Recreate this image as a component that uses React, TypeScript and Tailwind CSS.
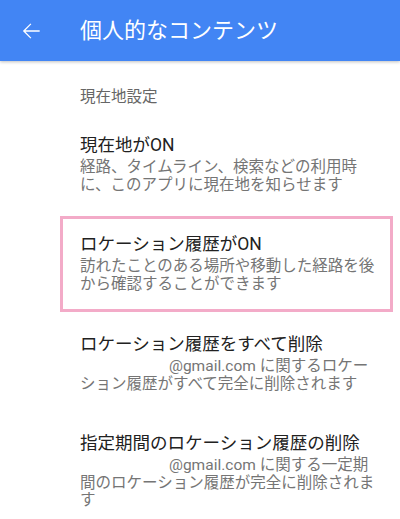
import React from "react";

const font = { fontFamily: 'Roboto, "Noto Sans CJK JP", sans-serif' };

function Item({ title, lines, indent }: { title: string; lines: string[]; indent?: boolean }) {
  return (
    <div>
      <p className="text-[17.5px] leading-[22px] text-[#212121] whitespace-nowrap">{title}</p>
      <div className="mt-[3px] text-[15.5px] leading-[17.5px] text-[#757575]">
        {lines.map((l, i) => (
          <p key={i} className="whitespace-nowrap">
            {indent && i === 0 && <span className="inline-block w-[89px]" />}
            {l}
          </p>
        ))}
      </div>
    </div>
  );
}

export default function App() {
  return (
    <div className="w-[400px] h-[519px] bg-white overflow-hidden" style={font}>
      {/* Toolbar */}
      <div className="h-[61px] bg-[#4285f4] flex items-center shadow-[0_1px_3px_rgba(0,0,0,0.25)] relative">
        <svg width="26" height="26" viewBox="0 0 24 24" className="ml-[18px] fill-white">
          <path d="M20 11.2H6.9l5.4-5.4L11.5 5 4.5 12l7 7 .8-.8-5.4-5.4H20v-1.6z" />
        </svg>
        <h1 className="ml-[36px] text-[22px] text-white leading-none">個人的なコンテンツ</h1>
      </div>

      <div className="pl-[80px]">
        <p className="mt-[26px] text-[15.5px] leading-[20px] text-[#666666]">現在地設定</p>

        <div className="mt-[27px]">
          <Item
            title="現在地がON"
            lines={["経路、タイムライン、検索などの利用時", "に、このアプリに現在地を知らせます"]}
          />
        </div>

        {/* Highlighted item */}
        <div className="mt-[22px] -ml-[20px] w-[333px] border-[3px] border-[#f3abc8] pl-[17px] pt-[14px] pb-[16px]">
          <Item
            title="ロケーション履歴がON"
            lines={["訪れたことのある場所や移動した経路を後", "から確認することができます"]}
          />
        </div>

        <div className="mt-[21px]">
          <Item
            title="ロケーション履歴をすべて削除"
            indent
            lines={["@gmail.com に関するロケー", "ション履歴がすべて完全に削除されます"]}
          />
        </div>

        <div className="mt-[39px]">
          <Item
            title="指定期間のロケーション履歴の削除"
            indent
            lines={["@gmail.com に関する一定期", "間のロケーション履歴が完全に削除されま", "す"]}
          />
        </div>
      </div>
    </div>
  );
}
